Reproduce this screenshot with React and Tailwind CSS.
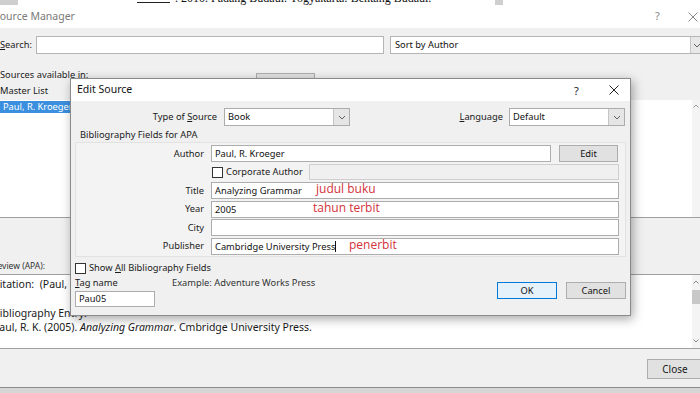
import React from "react";

function Chevron({ className = "" }) {
  return (
    <svg width="8" height="5" viewBox="0 0 8 5" className={className}>
      <path d="M1 1l3 3 3-3" fill="none" stroke="#606060" strokeWidth="1" />
    </svg>
  );
}

function XIcon({ size = 10, color = "#222" }) {
  return (
    <svg width={size} height={size} viewBox="0 0 10 10">
      <path d="M0.5 0.5l9 9M9.5 0.5l-9 9" stroke={color} strokeWidth="1" />
    </svg>
  );
}

function Select({ value, className = "" }) {
  return (
    <div className={`flex h-[18px] border border-[#acacac] bg-white ${className}`}>
      <span className="flex-1 px-[3px] leading-[16px] text-[#111]">{value}</span>
      <div className="w-[16px] bg-[#e5e5e5] border-l border-[#c4c4c4] flex items-center justify-center">
        <Chevron />
      </div>
    </div>
  );
}

function Field({ label, value, children }) {
  return (
    <div className="flex items-center h-[17px]">
      <span className="w-[128px] text-right pr-0 text-[#1a1a1a]">{label}</span>
      <div className="ml-[7px] w-[408px] h-[17px] border border-[#adadad] bg-white px-[3px] leading-[15px] text-[#111] flex items-center">
        {value}
        {children}
      </div>
    </div>
  );
}

function Checkbox() {
  return <div className="w-[11px] h-[11px] border border-[#333] bg-white" />;
}

export default function App() {
  return (
    <div className="w-[700px] h-[393px] overflow-hidden relative bg-[#d6d6d6] font-['Noto_Sans',sans-serif] text-[9.3px]">
      {/* document strip behind */}
      <div className="h-[5px] bg-white relative overflow-hidden">
        <div className="absolute left-0 top-0 w-[18px] h-[5px] bg-[#cfcfcf]" />
        <div className="absolute left-[495px] top-0 w-[8px] h-[5px] bg-[#cfcfcf]" />
        <div className="absolute left-[137px] top-[2px] w-[33px] h-[1px] bg-[#222]" />
        <div className="absolute left-[175px] top-[-11px] text-[12px] font-['Liberation_Serif',serif] text-[#111] whitespace-nowrap">
          . 2010. Padang Budaul. Yogyakarta: Bentang Budaul.
        </div>
      </div>

      {/* Source Manager window */}
      <div className="h-[383px] flex flex-col bg-[#f0f0f0] border-b border-[#8c8c8c]">
        <div className="h-[23px] bg-white flex items-center text-[10.5px] text-[#7a7a7a] relative">
          <span className="ml-[-6px] whitespace-nowrap">Source Manager</span>
          <span className="absolute left-[655px] text-[11px] text-[#888]">?</span>
          <span className="absolute left-[688px] top-[7px]"><XIcon size={10} color="#888" /></span>
        </div>

        {/* Search row */}
        <div className="flex items-center mt-[8px] h-[18px]">
          <span className="w-[36px] text-[#1a1a1a]"><span className="underline">S</span>earch:</span>
          <div className="w-[348px] h-[18px] border border-[#b5b5b5] bg-white" />
          <div className="ml-[6px] flex-1 mr-[-8px] flex h-[18px] border border-[#b5b5b5] bg-white">
            <span className="flex-1 px-[4px] leading-[16px] text-[#111]">Sort by Author</span>
            <div className="w-[17px] bg-[#e8e8e8] border-l border-[#c4c4c4] flex items-center justify-start pl-[2px]">
              <Chevron />
            </div>
          </div>
        </div>

        {/* Sources area */}
        <div className="flex mt-[14px]">
          <div className="w-[252px] flex flex-col">
            <span className="h-[13px] leading-[13px] text-[#1a1a1a] whitespace-nowrap">Sources available in:</span>
            <span className="h-[13px] leading-[13px] mt-[3px] text-[#1a1a1a]">Master List</span>
            <div className="mt-[3px] h-[118px] bg-white border-b border-[#a0a0a0] pt-[1px]">
              <div className="h-[12px] bg-[#3a8fde] text-white leading-[12px] pl-[3px] whitespace-nowrap">Paul, R. Kroeger</div>
            </div>
          </div>
          <div className="w-[70px] pl-[4px] pt-[5px]">
            <div className="w-[59px] h-[20px] bg-[#e1e1e1] border border-[#adadad]" />
          </div>
          <div className="flex-1 flex flex-col">
            <span className="h-[13px]" />
            <span className="h-[13px] mt-[3px] text-[#1a1a1a] pl-[4px]">Current List</span>
            <div className="mt-[3px] h-[118px] bg-white border-b border-[#a0a0a0] flex justify-end">
              <div className="w-[8px] bg-[#f4f4f4] flex flex-col items-center pt-[4px]">
                <svg width="6" height="4" viewBox="0 0 6 4"><path d="M0.5 3.5L3 1l2.5 2.5" fill="none" stroke="#999" /></svg>
              </div>
            </div>
          </div>
        </div>

        {/* Preview */}
        <div className="mt-[41px] h-[14px] text-[8.5px] text-[#333] leading-[14px] ml-[-11px] whitespace-nowrap">Preview (APA):</div>
        <div className="mt-[1px] h-[75px] bg-white border-t border-b border-[#a0a0a0] flex text-[10.5px] text-[#1a1a1a]">
          <div className="flex-1 pt-[2px] ml-[-7px] whitespace-nowrap">
            <div className="leading-[14px]">Citation:&nbsp; (Paul, R. Kroeger, 2005)</div>
            <div className="leading-[14px] mt-[15px]">Bibliography Entry:</div>
            <div className="leading-[14px]">Paul, R. K. (2005). <i>Analyzing Grammar</i>. Cmbridge University Press.</div>
          </div>
          <div className="w-[8px] bg-[#f4f4f4] flex flex-col items-center justify-between py-[5px]">
            <svg width="6" height="4" viewBox="0 0 6 4"><path d="M0.5 3.5L3 1l2.5 2.5" fill="none" stroke="#888" /></svg>
            <div className="w-[8px] h-[14px] bg-[#c8c8c8] -mt-[30px]" />
            <svg width="6" height="4" viewBox="0 0 6 4"><path d="M0.5 0.5L3 3l2.5-2.5" fill="none" stroke="#888" /></svg>
          </div>
        </div>

        <div className="flex-1 flex justify-end items-start pt-[10px]">
          <div className="w-[56px] mr-[-3px] h-[20px] bg-[#e1e1e1] border border-[#adadad] flex items-center justify-center text-[10px] text-[#1a1a1a]">Close</div>
        </div>
      </div>

      {/* Edit Source dialog */}
      <div className="absolute left-[70px] top-[78px] w-[561px] h-[238px] bg-[#f0f0f0] border border-[#8a8a8a] shadow-[2px_3px_10px_rgba(0,0,0,0.35)] flex flex-col">
        <div className="h-[22px] bg-white flex items-center relative">
          <span className="ml-[6px] text-[10.5px] text-[#111]">Edit Source</span>
          <span className="absolute left-[503px] top-[4px] text-[11px] text-[#222]">?</span>
          <span className="absolute left-[538px] top-[6px]"><XIcon size={10} color="#222" /></span>
        </div>

        {/* Type row */}
        <div className="mt-[7px] flex items-center h-[18px]">
          <span className="w-[146px] text-right text-[#1a1a1a]">Type of <span className="underline">S</span>ource</span>
          <Select value="Book" className="ml-[7px] w-[126px]" />
          <span className="flex-1 text-right text-[#1a1a1a]"><span className="underline">L</span>anguage</span>
          <Select value="Default" className="ml-[6px] w-[116px] mr-[5px]" />
        </div>

        <div className="mt-[3px] h-[12px] leading-[12px] ml-[9px] text-[#1a1a1a]">Bibliography Fields for APA</div>

        <div className="mt-[1px] ml-[4px] mr-[4px] h-[115px] bg-[#f3f3f3] border border-[#e2e2e2] pt-[2px] flex flex-col gap-[1.5px] relative">
          <div className="flex items-center h-[17px]">
            <span className="w-[128px] text-right text-[#1a1a1a]">Author</span>
            <div className="ml-[7px] w-[340px] h-[17px] border border-[#adadad] bg-white px-[3px] leading-[15px] text-[#111]">Paul, R. Kroeger</div>
            <div className="ml-[8px] w-[59px] h-[17px] bg-[#e1e1e1] border border-[#adadad] flex items-center justify-center text-[#111]">Edit</div>
          </div>
          <div className="flex items-center h-[17px]">
            <div className="ml-[136px]"><Checkbox /></div>
            <span className="ml-[3px] w-[83px] text-[#1a1a1a]">Corporate Author</span>
            <div className="w-[310px] h-[16px] border border-[#cfcfcf] bg-[#f0f0f0]" />
          </div>
          <Field label="Title" value="Analyzing Grammar" />
          <Field label="Year" value="2005" />
          <Field label="City" value="" />
          <Field label="Publisher" value="Cambridge University Press">
            <span className="w-[1px] h-[11px] bg-[#111]" />
          </Field>

          {/* handwritten annotations */}
          <span className="absolute left-[240px] top-[39px] text-[12px] text-[#d2323c] font-['Comic_Sans_MS','Open_Sans',sans-serif] leading-[14px]">judul buku</span>
          <span className="absolute left-[237px] top-[58px] text-[12px] text-[#d2323c] font-['Comic_Sans_MS','Open_Sans',sans-serif] leading-[14px]">tahun terbit</span>
          <span className="absolute left-[273px] top-[95px] text-[12px] text-[#d2323c] font-['Comic_Sans_MS','Open_Sans',sans-serif] leading-[14px]">penerbit</span>
        </div>

        <div className="mt-[5px] ml-[4px] flex items-center h-[12px]">
          <Checkbox />
          <span className="ml-[3px] text-[#1a1a1a]">Show <span className="underline">A</span>ll Bibliography Fields</span>
        </div>

        <div className="mt-[3px] ml-[4px] flex">
          <div className="flex flex-col">
            <span className="h-[12px] leading-[12px] text-[#1a1a1a]"><span className="underline">T</span>ag name</span>
            <div className="mt-[2px] w-[80px] h-[16px] border border-[#adadad] bg-white px-[3px] leading-[14px] text-[#111]">Pau05</div>
          </div>
          <span className="ml-[17px] h-[12px] leading-[12px] text-[#333] whitespace-nowrap">Example: Adventure Works Press</span>
          <div className="flex-1 flex justify-end items-start pt-[5px] mr-[4px] gap-[9px]">
            <div className="w-[60px] h-[17px] bg-[#e5f1fb] border border-[#0078d7] flex items-center justify-center text-[#111]">OK</div>
            <div className="w-[60px] h-[17px] bg-[#e1e1e1] border border-[#adadad] flex items-center justify-center text-[#111]">Cancel</div>
          </div>
        </div>
      </div>
    </div>
  );
}
